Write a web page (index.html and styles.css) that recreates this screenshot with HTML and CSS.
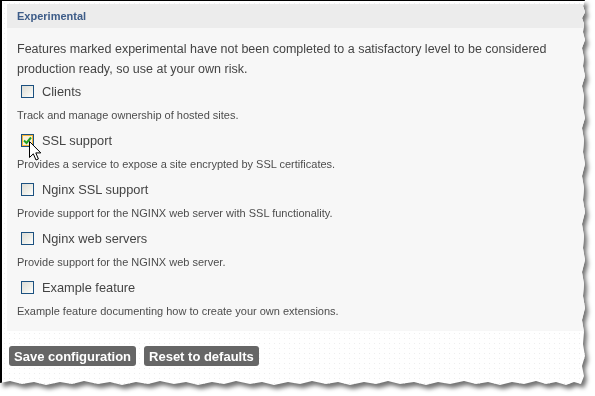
FILE: index.html
```html
<!DOCTYPE html>
<html lang="en">
<head>
    <meta charset="UTF-8">
    <title>Experimental features</title>
    <link rel="stylesheet" href="styles.css">
</head>
<body>
    <div class="torn">
        <div class="shot">
            <fieldset class="panel">
                <div class="panel-title">Experimental</div>
                <div class="panel-body">
                    <p class="intro">Features marked experimental have not been completed to a satisfactory level to be considered production ready, so use at your own risk.</p>

                    <div class="option">
                        <label class="option-label"><span class="box"></span>Clients</label>
                        <div class="option-desc">Track and manage ownership of hosted sites.</div>
                    </div>

                    <div class="option">
                        <label class="option-label"><span class="box checked hover">
                            <svg width="9" height="9" viewBox="0 0 9 9"><path d="M1 4.5 L3.5 7 L8 1.5" fill="none" stroke="#21a121" stroke-width="2"/></svg>
                        </span>SSL support</label>
                        <div class="option-desc">Provides a service to expose a site encrypted by SSL certificates.</div>
                        <svg class="cursor" width="13" height="21" viewBox="0 0 13 21"><path d="M0.5 0.5 L0.5 16.5 L4.3 12.8 L7 19 L9.4 18 L6.8 11.9 L11.8 11.9 Z" fill="#fff" stroke="#000" stroke-width="1"/></svg>
                    </div>

                    <div class="option">
                        <label class="option-label"><span class="box"></span>Nginx SSL support</label>
                        <div class="option-desc">Provide support for the NGINX web server with SSL functionality.</div>
                    </div>

                    <div class="option">
                        <label class="option-label"><span class="box"></span>Nginx web servers</label>
                        <div class="option-desc">Provide support for the NGINX web server.</div>
                    </div>

                    <div class="option">
                        <label class="option-label"><span class="box"></span>Example feature</label>
                        <div class="option-desc">Example feature documenting how to create your own extensions.</div>
                    </div>
                </div>
            </fieldset>

            <div class="actions">
                <button class="btn">Save configuration</button>
                <button class="btn">Reset to defaults</button>
            </div>
        </div>
    </div>
</body>
</html>
```

FILE: styles.css
```css
* {
    margin: 0;
    padding: 0;
    box-sizing: border-box;
}

body {
    background: #fff;
    font-family: 'Liberation Sans', Arial, sans-serif;
    color: #444;
    width: 595px;
    height: 396px;
    overflow: hidden;
}

.torn {
    width: 586px;
    height: 386px;
    filter: drop-shadow(3px 4px 2px rgba(0,0,0,0.55));
}

.shot {
    width: 586px;
    height: 386px;
    overflow: hidden;
    border-top: 1px solid #000;
    border-left: 2px solid #000;
    background-color: #fff;
    background-image: radial-gradient(circle, #eeeeee 0.7px, transparent 0.9px);
    background-size: 5px 5px;
    clip-path: polygon(0 0, 585px 0, 583px 6px, 585px 12px, 582px 18px, 584px 24px, 583px 32px, 585px 40px, 582px 48px, 584px 58px, 583px 66px, 585px 76px, 582px 86px, 584px 96px, 583px 108px, 585px 118px, 582px 128px, 584px 140px, 583px 152px, 585px 164px, 582px 176px, 584px 188px, 583px 200px, 585px 212px, 582px 224px, 584px 236px, 583px 248px, 585px 260px, 582px 272px, 584px 284px, 583px 296px, 585px 308px, 582px 320px, 584px 332px, 583px 344px, 585px 356px, 582px 366px, 584px 376px, 581px 384px, 574px 382px, 566px 385px, 556px 382px, 546px 384px, 536px 381px, 524px 384px, 512px 382px, 500px 385px, 488px 382px, 476px 384px, 464px 381px, 450px 384px, 438px 382px, 426px 385px, 414px 382px, 400px 384px, 388px 381px, 376px 384px, 364px 382px, 350px 385px, 338px 382px, 326px 384px, 312px 381px, 300px 384px, 288px 382px, 274px 385px, 262px 382px, 250px 384px, 236px 381px, 224px 384px, 212px 382px, 198px 385px, 186px 382px, 174px 384px, 160px 381px, 148px 384px, 136px 382px, 122px 385px, 110px 382px, 98px 384px, 84px 381px, 72px 384px, 60px 382px, 46px 385px, 34px 382px, 22px 384px, 10px 381px, 0 383px);
}

.panel {
    border: none;
    margin: 3px 0 0 5px;
    width: 590px;
    background: #f7f7f7;
}

.panel-title {
    background: #ececec;
    height: 24px;
    line-height: 24px;
    padding-left: 10px;
    font-size: 11px;
    font-weight: bold;
    color: #3d5c88;
}

.panel-body {
    padding: 11px 10px 13px 10px;
}

.intro {
    font-size: 12.5px;
    line-height: 20px;
    color: #444;
    width: 575px;
    margin-bottom: 2px;
}

.option {
    position: relative;
    margin-bottom: 8px;
}

.option:last-child {
    margin-bottom: 0;
}

.option-label {
    display: flex;
    align-items: center;
    height: 20px;
    font-size: 12.8px;
    color: #444;
}

.box {
    display: flex;
    align-items: center;
    justify-content: center;
    width: 13px;
    height: 13px;
    margin: 0 8px 0 4px;
    border: 1px solid #1c5180;
    background: linear-gradient(135deg, #dcdcd6 0%, #f0f0ea 60%, #fff 100%);
}

.box.hover {
    background: #f8f1dc;
    box-shadow: inset 0 0 0 1px #f8b636;
}

.option-desc {
    margin-top: 7px;
    font-size: 11px;
    line-height: 14px;
    color: #4d4d4d;
}

.cursor {
    position: absolute;
    left: 12px;
    top: 11px;
}

.actions {
    display: flex;
    gap: 8px;
    margin: 15px 0 0 7px;
}

.btn {
    background: #666;
    color: #fff;
    border: none;
    border-radius: 3px;
    height: 20px;
    padding: 0 5px;
    font-family: 'Liberation Sans', Arial, sans-serif;
    font-weight: bold;
    font-size: 13px;
}
```
